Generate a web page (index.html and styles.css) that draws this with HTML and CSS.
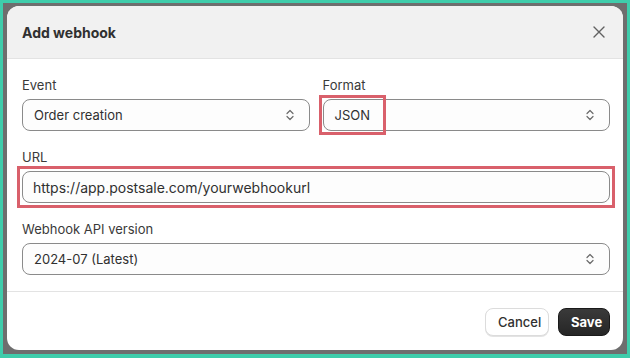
FILE: index.html
```html
<!DOCTYPE html>
<html>
<head>
<meta charset="utf-8">
<link rel="stylesheet" href="styles.css">
</head>
<body>
<div class="frame">
  <div class="card">
    <div class="header">
      <h2 class="title">Add webhook</h2>
      <button class="close" aria-label="Close">
        <svg width="12" height="12" viewBox="0 0 12 12"><path d="M1 1L11 11M11 1L1 11" stroke="#616161" stroke-width="1.4" stroke-linecap="round"/></svg>
      </button>
    </div>
    <div class="body">
      <div class="row two">
        <div class="field">
          <label class="label">Event</label>
          <div class="select"><span>Order creation</span>
            <svg class="chev" width="10" height="14" viewBox="0 0 10 14"><path d="M2 5.5L5 2.5L8 5.5M2 8.5L5 11.5L8 8.5" fill="none" stroke="#6a6a6a" stroke-width="1.2" stroke-linecap="round" stroke-linejoin="round"/></svg>
          </div>
        </div>
        <div class="field">
          <label class="label">Format</label>
          <div class="select json-wrap"><span>JSON</span>
            <svg class="chev" width="10" height="14" viewBox="0 0 10 14"><path d="M2 5.5L5 2.5L8 5.5M2 8.5L5 11.5L8 8.5" fill="none" stroke="#6a6a6a" stroke-width="1.2" stroke-linecap="round" stroke-linejoin="round"/></svg>
            <div class="mark mark-json"></div>
          </div>
        </div>
      </div>
      <div class="field">
        <label class="label">URL</label>
        <div class="input url-wrap"><span>https://app.postsale.com/yourwebhookurl</span>
          <div class="mark mark-url"></div>
        </div>
      </div>
      <div class="field">
        <label class="label">Webhook API version</label>
        <div class="select"><span>2024-07 (Latest)</span>
          <svg class="chev" width="10" height="14" viewBox="0 0 10 14"><path d="M2 5.5L5 2.5L8 5.5M2 8.5L5 11.5L8 8.5" fill="none" stroke="#6a6a6a" stroke-width="1.2" stroke-linecap="round" stroke-linejoin="round"/></svg>
        </div>
      </div>
    </div>
    <div class="footer">
      <button class="btn btn-cancel">Cancel</button>
      <button class="btn btn-save">Save</button>
    </div>
  </div>
</div>
</body>
</html>
```

FILE: styles.css
```css
* { box-sizing: border-box; }
html, body { margin: 0; padding: 0; }
body {
  width: 630px;
  height: 358px;
  overflow: hidden;
  font-family: Inter, "Noto Sans", sans-serif;
  color: #303030;
}
.frame {
  width: 630px;
  height: 358px;
  border: 3px solid #3fcdab;
  border-bottom-width: 4px;
  background: #6e6e6e;
  padding: 3px 4px 4px 4px;
}
.card {
  height: 100%;
  background: #ffffff;
  border-radius: 12px;
  overflow: hidden;
  display: flex;
  flex-direction: column;
}
.header {
  height: 53px;
  background: #f1f1f1;
  border-bottom: 1px solid #e3e3e3;
  display: flex;
  align-items: center;
  justify-content: space-between;
  padding: 0 14px 0 15px;
}
.title {
  margin: 0;
  font-size: 14px;
  font-weight: 650;
  color: #303030;
}
.close {
  border: 0;
  background: none;
  padding: 0;
  width: 16px;
  height: 16px;
  display: flex;
  align-items: center;
  justify-content: center;
  margin-right: 2px;
}
.body {
  padding: 16px 13px 16px 15px;
  display: flex;
  flex-direction: column;
  gap: 16px;
  border-bottom: 1px solid #e3e3e3;
}
.row.two {
  display: grid;
  grid-template-columns: 1fr 1fr;
  gap: 13px;
}
.field {
  display: flex;
  flex-direction: column;
  gap: 4px;
}
.label {
  font-size: 13px;
  line-height: 20px;
  color: #3a3a3a;
}
.select, .input {
  position: relative;
  height: 32px;
  border: 1px solid #8a8a8a;
  border-radius: 8px;
  background: #fdfdfd;
  display: flex;
  align-items: center;
  padding: 0 11px;
  font-size: 13px;
  color: #303030;
}
.input { font-size: 14px; padding: 0 10px; }
.chev {
  margin-left: auto;
  margin-right: 3px;
}
.mark {
  position: absolute;
  border: 3px solid #d9606b;
  pointer-events: none;
}
.mark-json {
  left: -5px;
  top: -5px;
  width: 67px;
  height: 40px;
}
.mark-url {
  left: -6px;
  top: -6px;
  right: -6px;
  bottom: -6px;
}
.footer {
  flex: 1;
  display: flex;
  justify-content: flex-end;
  align-items: flex-start;
  gap: 9px;
  padding: 16px 13px 0 0;
}
.btn {
  height: 28px;
  border-radius: 8px;
  font-family: Inter, "Noto Sans", sans-serif;
  font-size: 13px;
  padding: 0 12px;
}
.btn-cancel {
  background: #fff;
  border: 1px solid #dcdcdc;
  box-shadow: 0 1px 0 #e3e3e3;
  color: #303030;
  font-weight: 450;
  width: 64px;
}
.btn-save {
  background: linear-gradient(#3a3a3a, #262626);
  border: 1px solid #1a1a1a;
  color: #fff;
  font-weight: 650;
  width: 52px;
}
```
